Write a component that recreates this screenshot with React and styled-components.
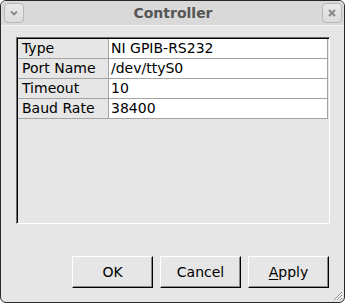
import React from 'react';
import styled, { createGlobalStyle } from 'styled-components';

const GlobalStyle = createGlobalStyle`
  html, body {
    margin: 0;
    padding: 0;
    background: #ffffff;
  }
  * {
    box-sizing: border-box;
  }
`;

const Window = styled.div`
  width: 345px;
  height: 303px;
  display: flex;
  flex-direction: column;
  background: #e6e6e6;
  border: 1px solid #2a2a2a;
  border-radius: 6px;
  overflow: hidden;
  position: relative;
  font-family: 'DejaVu Sans', 'Liberation Sans', sans-serif;
`;

const TitleBar = styled.div`
  height: 25px;
  flex: none;
  display: flex;
  align-items: center;
  justify-content: space-between;
  padding: 0 2px 0 3px;
  background: #d9d9d9;
  border-bottom: 1px solid #f2f2f2;
`;

const Title = styled.div`
  flex: 1;
  text-align: center;
  font-weight: bold;
  font-size: 14px;
  color: #555555;
`;

const TitleButton = styled.div`
  width: 20px;
  height: 20px;
  border: 1px solid #b8b8b8;
  border-radius: 4px;
  background: linear-gradient(#e9e9e9, #dcdcdc);
  display: flex;
  align-items: center;
  justify-content: center;
`;

const Body = styled.div`
  flex: 1;
  display: flex;
  flex-direction: column;
  padding: 11px 14px 0 15px;
`;

const Frame = styled.div`
  height: 187px;
  border-top: 1px solid #6e6e6e;
  border-left: 1px solid #6e6e6e;
  border-right: 1px solid #ffffff;
  border-bottom: 1px solid #ffffff;
  box-shadow: inset 1px 1px 0 #000000;
  padding: 1px 1px 0 1px;
`;

const Grid = styled.div`
  display: grid;
  grid-template-columns: 91px 219px;
`;

const Cell = styled.div`
  height: 20px;
  border-bottom: 1px solid #a3a3a3;
  border-right: 1px solid #a3a3a3;
  background: ${(p) => (p.$label ? '#e6e6e6' : '#ffffff')};
  font-size: 14px;
  color: #000000;
  line-height: 19px;
  padding-left: ${(p) => (p.$label ? '4px' : '2px')};
  white-space: nowrap;
`;

const Buttons = styled.div`
  display: flex;
  justify-content: flex-end;
  gap: 7px;
  margin-top: 32px;
  padding-right: 1px;
`;

const Button = styled.button`
  width: 81px;
  height: 32px;
  padding: 0;
  font-family: 'DejaVu Sans', 'Liberation Sans', sans-serif;
  font-size: 14px;
  color: #000000;
  background: #e6e6e6;
  border: 1px solid;
  border-color: #ffffff #000000 #000000 #ffffff;
  box-shadow: inset -1px -1px 0 #8a8a8a;
  u {
    text-decoration: underline;
    text-underline-offset: 2px;
  }
`;

const Grip = styled.svg`
  position: absolute;
  right: 1px;
  bottom: 1px;
`;

const rows = [
  ['Type', 'NI GPIB-RS232'],
  ['Port Name', '/dev/ttyS0'],
  ['Timeout', '10'],
  ['Baud Rate', '38400'],
];

export default function App() {
  return (
    <>
      <GlobalStyle />
      <Window>
        <TitleBar>
          <TitleButton>
            <svg width="10" height="8" viewBox="0 0 10 8">
              <path d="M2 2.5 L5 5.5 L8 2.5" fill="none" stroke="#8a8a8a" strokeWidth="1.8" />
            </svg>
          </TitleButton>
          <Title>Controller</Title>
          <TitleButton>
            <svg width="10" height="10" viewBox="0 0 10 10">
              <path d="M2 2 L8 8 M8 2 L2 8" fill="none" stroke="#8a8a8a" strokeWidth="2" />
            </svg>
          </TitleButton>
        </TitleBar>
        <Body>
          <Frame>
            <Grid>
              {rows.map(([k, v]) => (
                <React.Fragment key={k}>
                  <Cell $label>{k}</Cell>
                  <Cell>{v}</Cell>
                </React.Fragment>
              ))}
            </Grid>
          </Frame>
          <Buttons>
            <Button>OK</Button>
            <Button>Cancel</Button>
            <Button>
              <u>A</u>pply
            </Button>
          </Buttons>
        </Body>
        <Grip width="12" height="12" viewBox="0 0 12 12">
          <path d="M11 3 L3 11 M11 6 L6 11 M11 9 L9 11" stroke="#8a8a8a" strokeWidth="1" />
          <path d="M11 4 L4 11 M11 7 L7 11 M11 10 L10 11" stroke="#ffffff" strokeWidth="1" />
        </Grip>
      </Window>
    </>
  );
}
